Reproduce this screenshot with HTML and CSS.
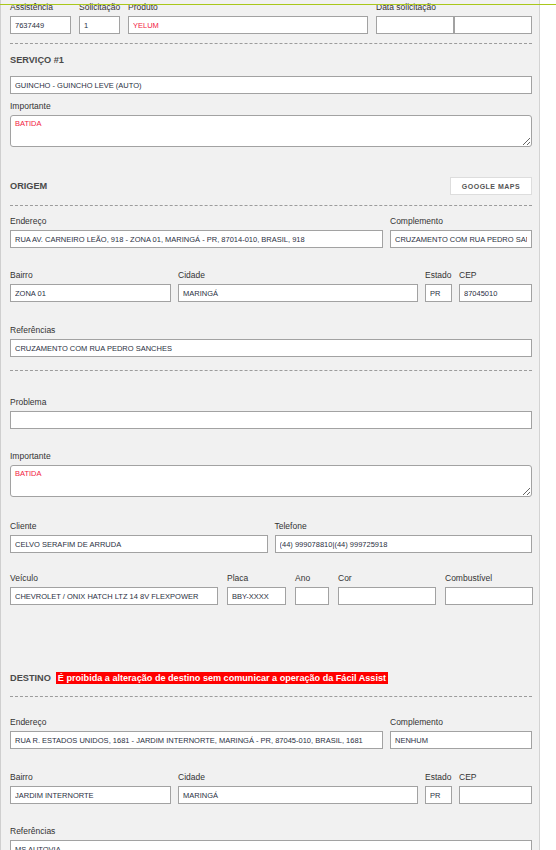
FILE: index.html
```html
<!DOCTYPE html>
<html lang="pt-BR">
<head>
<meta charset="utf-8">
<title>Serviço</title>
<link rel="stylesheet" href="styles.css">
</head>
<body>
<div class="topline"></div>
<div class="panel">
  <div class="grid g-top">
    <div class="field"><label>Assistência</label><input class="inp" value="7637449"></div>
    <div class="field"><label>Solicitação</label><input class="inp" value="1"></div>
    <div class="field"><label>Produto</label><input class="inp red" value="YELUM"></div>
    <div class="field"><label>Data solicitação</label><div class="pair"><input class="inp" value=""><input class="inp" value=""></div></div>
  </div>
  <div class="dash d1"></div>
  <h3 class="sec s1">SERVIÇO #1</h3>
  <input class="inp full m-serv" value="GUINCHO - GUINCHO LEVE (AUTO)">
  <div class="field m-imp1"><label>Importante</label><textarea class="area red">BATIDA</textarea></div>

  <div class="sec-row m-origem">
    <h3 class="sec">ORIGEM</h3>
    <button class="btn">GOOGLE MAPS</button>
  </div>
  <div class="dash d2"></div>
  <div class="grid g-end m-end1">
    <div class="field"><label>Endereço</label><input class="inp" value="RUA AV. CARNEIRO LEÃO, 918 - ZONA 01, MARINGÁ - PR, 87014-010, BRASIL, 918"></div>
    <div class="field"><label>Complemento</label><input class="inp" value="CRUZAMENTO COM RUA PEDRO SANCHES"></div>
  </div>
  <div class="grid g-bairro m-bai1">
    <div class="field"><label>Bairro</label><input class="inp" value="ZONA 01"></div>
    <div class="field"><label>Cidade</label><input class="inp" value="MARINGÁ"></div>
    <div class="field"><label>Estado</label><input class="inp" value="PR"></div>
    <div class="field"><label>CEP</label><input class="inp" value="87045010"></div>
  </div>
  <div class="field m-ref1"><label>Referências</label><input class="inp" value="CRUZAMENTO COM RUA PEDRO SANCHES"></div>
  <div class="dash d3"></div>
  <div class="field m-prob"><label>Problema</label><input class="inp" value=""></div>
  <div class="field m-imp2"><label>Importante</label><textarea class="area red">BATIDA</textarea></div>
  <div class="grid g-cli m-cli">
    <div class="field"><label>Cliente</label><input class="inp" value="CELVO SERAFIM DE ARRUDA"></div>
    <div class="field"><label>Telefone</label><input class="inp" value="(44) 999078810|(44) 999725918"></div>
  </div>
  <div class="grid g-vei m-vei">
    <div class="field"><label>Veículo</label><input class="inp" value="CHEVROLET / ONIX HATCH LTZ 14 8V FLEXPOWER"></div>
    <div class="field"><label>Placa</label><input class="inp" value="BBY-XXXX"></div>
    <div class="field"><label>Ano</label><input class="inp" value=""></div>
    <div class="field"><label>Cor</label><input class="inp" value=""></div>
    <div class="field"><label>Combustível</label><input class="inp" value=""></div>
  </div>

  <div class="sec-row m-destino">
    <h3 class="sec">DESTINO</h3>
    <span class="alert">É proibida a alteração de destino sem comunicar a operação da Fácil Assist</span>
  </div>
  <div class="dash d4"></div>
  <div class="grid g-end m-end2">
    <div class="field"><label>Endereço</label><input class="inp" value="RUA R. ESTADOS UNIDOS, 1681 - JARDIM INTERNORTE, MARINGÁ - PR, 87045-010, BRASIL, 1681"></div>
    <div class="field"><label>Complemento</label><input class="inp" value="NENHUM"></div>
  </div>
  <div class="grid g-bairro m-bai2">
    <div class="field"><label>Bairro</label><input class="inp" value="JARDIM INTERNORTE"></div>
    <div class="field"><label>Cidade</label><input class="inp" value="MARINGÁ"></div>
    <div class="field"><label>Estado</label><input class="inp" value="PR"></div>
    <div class="field"><label>CEP</label><input class="inp" value=""></div>
  </div>
  <div class="field m-ref2"><label>Referências</label><input class="inp" value="MS AUTOVIA"></div>
</div>
</body>
</html>
```

FILE: styles.css
```css
* { box-sizing: border-box; }
html, body { margin: 0; padding: 0; background: #ffffff; }
body {
  font-family: "Liberation Sans", Arial, sans-serif;
  width: 556px;
  height: 850px;
  overflow: hidden;
  position: relative;
}
.topline {
  position: absolute;
  left: 0;
  top: 4px;
  width: 556px;
  height: 1px;
  background: #a9c71b;
}
.panel {
  width: 540px;
  min-height: 900px;
  background: #f1f1f1;
  border-left: 1px solid #cfcfcf;
  border-right: 1px solid #d3d3d3;
  padding: 1px 7px 0 9px;
}
.field { display: flex; flex-direction: column; min-width: 0; }
.field label {
  display: block;
  height: 12px;
  line-height: 12px;
  font-size: 8.5px;
  color: #333;
  margin-bottom: 3px;
  white-space: nowrap;
}
.inp {
  display: block;
  width: 100%;
  height: 18px;
  margin: 0;
  border: 1px solid #a2a2a2;
  border-radius: 0;
  background: #fff;
  padding: 0 4px;
  font-family: "Liberation Sans", Arial, sans-serif;
  font-size: 7.5px;
  color: #2a2f42;
  outline: none;
}
.red { color: #f2213f; }
.full { width: 100%; }
.pair { display: flex; }
.pair .inp { flex: 1; width: 50%; }
.area {
  display: block;
  width: 100%;
  height: 32px;
  margin: 0;
  border: 1px solid #a2a2a2;
  border-radius: 3px;
  background: #fff;
  padding: 3px 4px;
  font-family: "Liberation Sans", Arial, sans-serif;
  font-size: 7.5px;
  line-height: 9px;
  resize: both;
  outline: none;
}
.grid { display: grid; column-gap: 7px; }
.g-top { grid-template-columns: 61px 41px 240px 156px; column-gap: 8px; }
.g-end { grid-template-columns: 373px 142px; }
.g-bairro { grid-template-columns: 161px 240px 27px 73px; }
.g-cli { grid-template-columns: 1fr 1fr; }
.g-vei { grid-template-columns: 208px 59px 34px 98px 88px; column-gap: 9px; }
.dash { height: 0; border-top: 1px dashed #9c9c9c; }
.sec {
  margin: 0;
  font-size: 9.2px;
  line-height: 16px;
  font-weight: bold;
  color: #4a4a4a;
}
.sec-row {
  display: flex;
  align-items: center;
  justify-content: space-between;
  height: 18px;
}
.m-destino { justify-content: flex-start; gap: 5px; height: 16px; }
.btn {
  width: 82px;
  height: 18px;
  background: #fff;
  border: 1px solid #dddddd;
  font-family: "Liberation Sans", Arial, sans-serif;
  font-weight: bold;
  font-size: 7px;
  letter-spacing: 0.5px;
  color: #555;
  padding: 0;
  margin: 0;
}
.alert {
  background: #ff0000;
  color: #fff;
  font-weight: bold;
  font-size: 9.1px;
  line-height: 12px;
  padding: 0 2px;
  white-space: nowrap;
}
.d1 { margin-top: 9px; }
.s1 { margin-top: 8px; }
.m-serv { margin-top: 8px; }
.m-imp1 { margin-top: 6px; }
.m-origem { margin-top: 30px; }
.d2 { margin-top: 10px; }
.m-end1 { margin-top: 9px; }
.m-bai1 { margin-top: 21px; }
.m-ref1 { margin-top: 22px; }
.d3 { margin-top: 13px; }
.m-prob { margin-top: 25px; }
.m-imp2 { margin-top: 21px; }
.m-cli { margin-top: 23px; }
.m-vei { margin-top: 19px; }
.m-destino { margin-top: 65px; }
.d4 { margin-top: 10px; }
.m-end2 { margin-top: 19px; }
.m-bai2 { margin-top: 22px; }
.m-ref2 { margin-top: 21px; }
```
